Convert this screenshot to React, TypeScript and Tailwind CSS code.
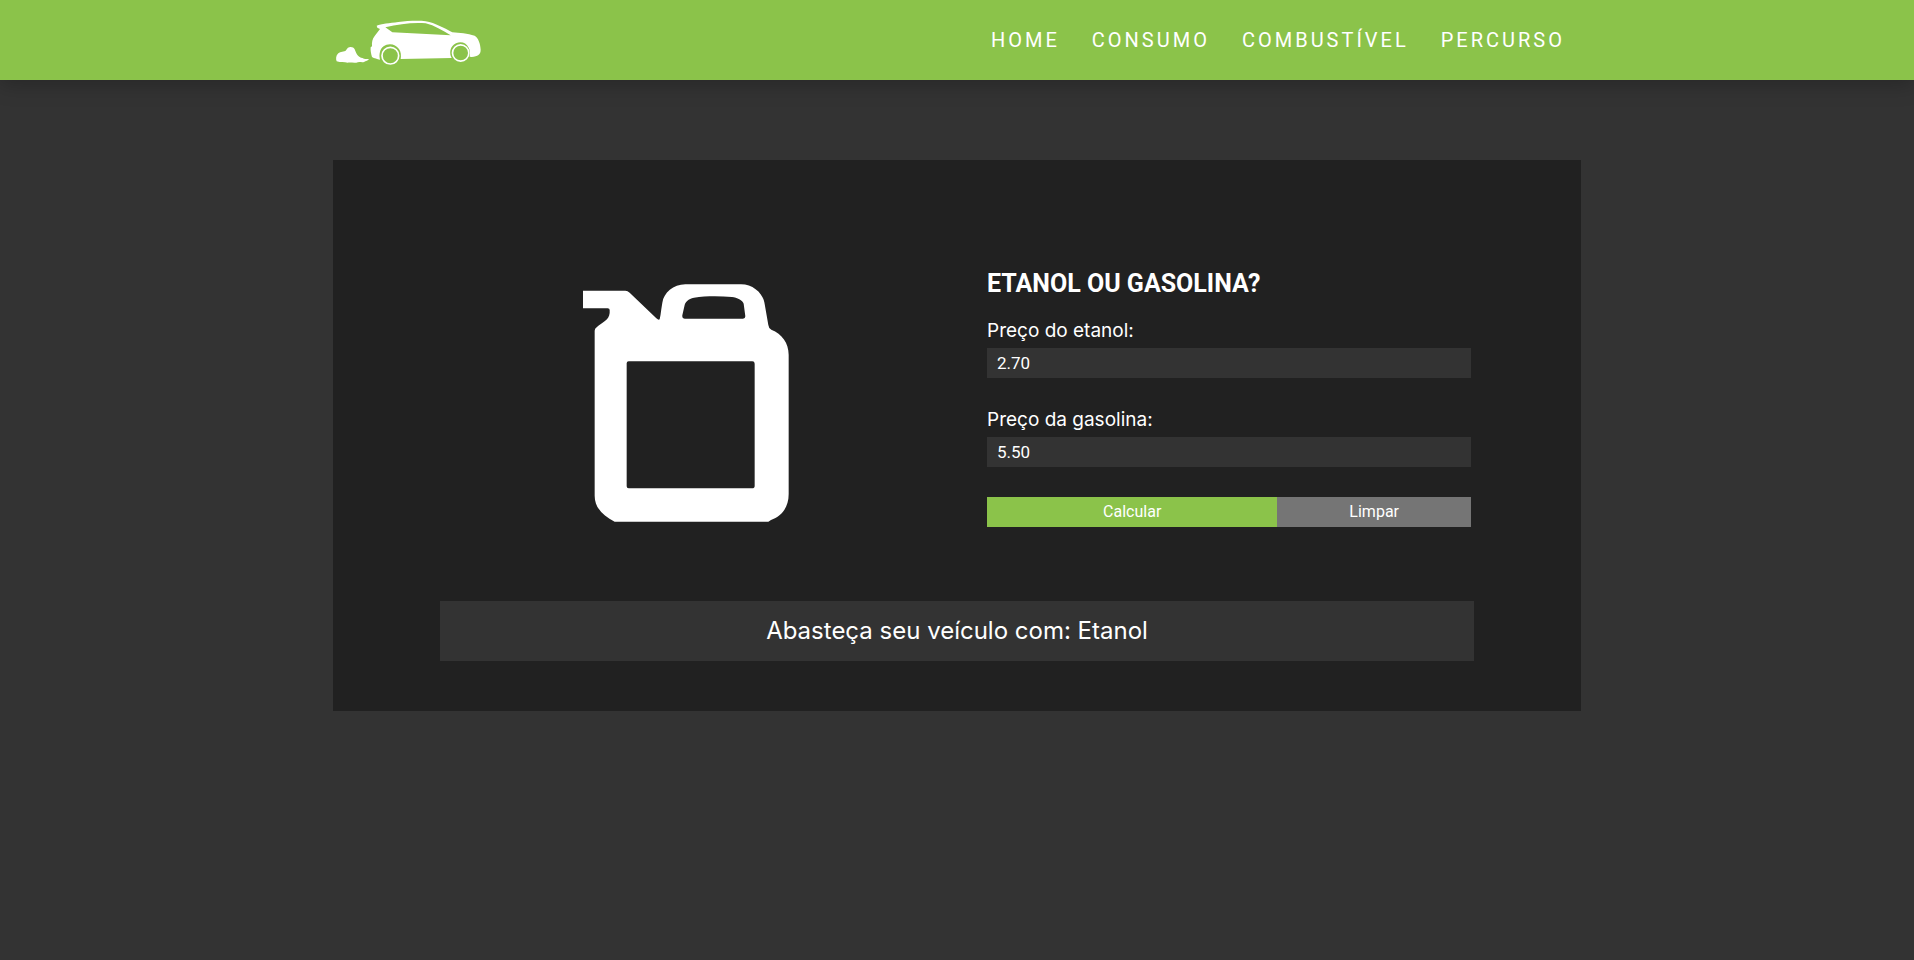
import { useState } from "react";
import type { FormEvent } from "react";

const links = [
  { label: "HOME", href: "#home" },
  { label: "CONSUMO", href: "#consumo" },
  { label: "COMBUSTÍVEL", href: "#combustivel" },
  { label: "PERCURSO", href: "#percurso" },
];

function CarLogo() {
  return (
    <svg viewBox="39 0 450 240" className="h-20 w-[150px]" fill="none" aria-hidden="true">
      <path
        fill="#fff"
        d="M50 184C47 177 48 167 53 162C58 155 68 156 76 153C80 151 81 143 88 142C94 140 101 142 104 148C107 155 109 163 115 168C120 174 126 173 132 176C137 178 143 176 147 178C145 182 137 183 132 186C125 188 117 184 109 188C101 189 91 187 83 188C73 186 62 189 50 184Z"
      />
      <path
        fill="#fff"
        fillRule="evenodd"
        d="M170 77C184 72 208 69 235 66C262 63 295 61 317 64C346 69 374 85 397 97C419 98 442 101 464 107C475 114 481 131 482 149C482 164 473 169 455 171L449 170C450 163 451 151 446 143C440 132 432 127 421 127C405 127 394 138 391 152C390 159 391 167 395 174L242 177C244 167 243 155 237 147C230 138 221 133 210 133C195 133 184 142 180 155C178 163 178 170 180 179C171 177 163 175 156 171C153 162 151 151 152 142L156 139C155 127 157 117 164 108L180 87L172 83ZM196 82L217 97L392 106C366 90 344 77 317 70C279 67 237 72 196 82Z"
      />
      <circle cx="211" cy="167" r="25" stroke="#fff" strokeWidth="5" />
      <circle cx="422" cy="159" r="24.5" stroke="#fff" strokeWidth="5" />
    </svg>
  );
}

function FuelCan() {
  return (
    <svg viewBox="71 71 618 714" className="h-[238px] w-[206px]" fill="#fff" aria-hidden="true">
      <path
        fillRule="evenodd"
        d="M71 91H198Q205 91 211 97L291 174Q298 181 301 177Q304 164 306 146L309 127C313 98 342 72 378 72H545C582 72 612 100 616 131L627 194Q628 204 636 208C668 221 688 247 688 283V702C688 741 667 768 635 779L627 784H166C130 766 106 741 106 706V211Q106 205 112 201C128 185 149 181 151 158V149Q151 144 145 144H71ZM377 175H551Q558 175 558 168L553 130C550 120 533 111 518 110C480 107 438 107 404 112C386 116 379 124 376 134L369 165Q368 175 377 175ZM208 303Q202 303 202 309V678Q202 684 208 684H578Q586 684 586 677V310Q586 303 579 303Z"
      />
    </svg>
  );
}

type FieldProps = {
  id: string;
  label: string;
  value: string;
  onChange: (value: string) => void;
};

function PriceField({ id, label, value, onChange }: FieldProps) {
  return (
    <div className="mb-[30px] flex flex-col">
      <label htmlFor={id} className="mb-1.5 font-['Inter',sans-serif] text-[19px] leading-[23px]">
        {label}
      </label>
      <input
        id={id}
        type="text"
        inputMode="decimal"
        value={value}
        onChange={(event) => onChange(event.target.value)}
        className="h-[30px] w-full bg-[#333333] px-2.5 text-[17px] text-white outline-none"
      />
    </div>
  );
}

export default function App() {
  const [ethanol, setEthanol] = useState("2.70");
  const [gasoline, setGasoline] = useState("5.50");
  const [result, setResult] = useState("Etanol");

  const calculate = (event: FormEvent) => {
    event.preventDefault();
    setResult(Number(ethanol) / Number(gasoline) < 0.7 ? "Etanol" : "Gasolina");
  };

  const clear = () => {
    setEthanol("");
    setGasoline("");
    setResult("");
  };

  return (
    <div className="min-h-screen bg-[#333333] font-['Roboto',sans-serif] text-white">
      <header className="bg-[#8bc34a] shadow-[0_4px_20px_rgba(0,0,0,0.25)]">
        <div className="mx-auto flex max-w-[1248px] flex-wrap items-center justify-between">
          <a href="#home" aria-label="Início">
            <CarLogo />
          </a>
          <nav>
            <ul className="flex flex-wrap">
              {links.map((link) => (
                <li key={link.label}>
                  <a href={link.href} className="block px-4 text-[20px] leading-7 tracking-[3px]">
                    {link.label}
                  </a>
                </li>
              ))}
            </ul>
          </nav>
        </div>
      </header>

      <main className="mx-auto mt-20 max-w-[1248px] bg-[#212121] px-6 pt-[108px] pb-[50px] lg:px-[107px]">
        <div className="grid gap-[50px] md:grid-cols-2">
          <div className="flex items-start justify-center pt-4">
            <FuelCan />
          </div>
          <form onSubmit={calculate} className="pr-[3px] pl-[5px]">
            <h1 className="mb-[19px] text-[25px] leading-8 font-bold">ETANOL OU GASOLINA?</h1>
            <PriceField id="etanol" label="Preço do etanol:" value={ethanol} onChange={setEthanol} />
            <PriceField id="gasolina" label="Preço da gasolina:" value={gasoline} onChange={setGasoline} />
            <div className="flex">
              <button type="submit" className="h-[30px] w-3/5 bg-[#8bc34a] text-base">
                Calcular
              </button>
              <button type="button" onClick={clear} className="h-[30px] w-2/5 bg-[#757575] text-base">
                Limpar
              </button>
            </div>
          </form>
        </div>
        <p className="mt-[74px] bg-[#333333] text-center font-['Inter',sans-serif] text-2xl leading-[60px]">
          Abasteça seu veículo com: {result}
        </p>
      </main>
    </div>
  );
}
